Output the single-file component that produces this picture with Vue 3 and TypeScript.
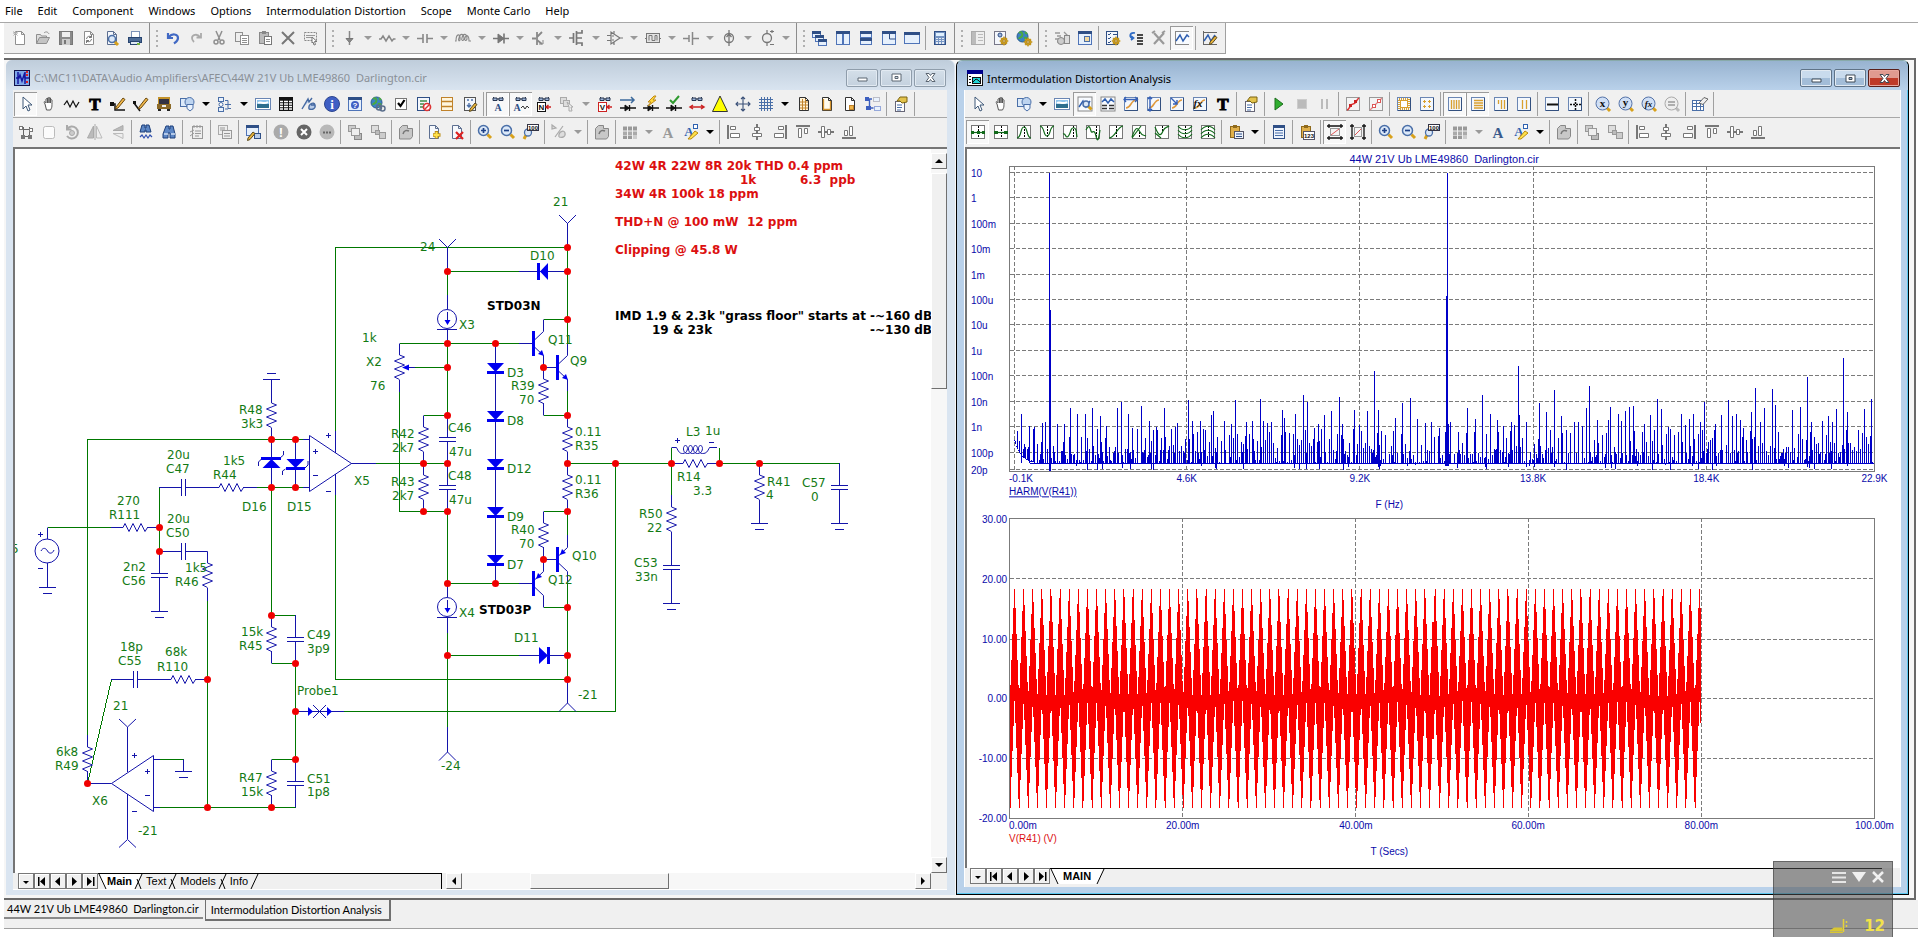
<script setup lang="ts">
import { ref } from 'vue'

const menus = ['File', 'Edit', 'Component', 'Windows', 'Options', 'Intermodulation Distortion', 'Scope', 'Monte Carlo', 'Help']

/* ---------- icon drawing helpers (16 x 16 grid) ---------- */
const p = (d: string, stroke = '#333', fill = 'none', w = 1) => `<path d="${d}" stroke="${stroke}" fill="${fill}" stroke-width="${w}"/>`
const r = (x: number, y: number, w: number, h: number, fill: string, stroke = 'none') =>
  `<rect x="${x}" y="${y}" width="${w}" height="${h}" fill="${fill}" stroke="${stroke}"/>`
const c = (x: number, y: number, rad: number, fill: string, stroke = 'none', w = 1) =>
  `<circle cx="${x}" cy="${y}" r="${rad}" fill="${fill}" stroke="${stroke}" stroke-width="${w}"/>`
const t = (s: string, x: number, y: number, size: number, fill: string, extra = '') =>
  `<text x="${x}" y="${y}" font-size="${size}" fill="${fill}" text-anchor="middle" font-weight="bold" ${extra}>${s}</text>`
const serif = 'font-family="Liberation Serif, serif"'
const G = '#8f8f8f'
const N = '#2f4f86'
const B = '#4a6fa8'
const doc = (s: string, f = '#fff') => p('M3.5 1.5h6l3 3v10h-9zM9.5 1.5v3h3', s, f)
const glasses = p('M3 2h4v2.500h-4zM9 2h4v2.500h-4zM7 3h2M3 2l1-1M13 2l-1-1', '#26344f', '#9db4d8', 1)
const lens = (x: number, y: number, rad: number, handle = '#d8a11c') =>
  p(`M${x + rad - 1} ${y + rad - 1}l3.500 3.500`, handle, 'none', 3) + c(x, y, rad, '#dbe8f8', B, 1.5)
const frame = r(1.5, 1.5, 13, 13, '#f4f8fd', '#6a86b4') + p('M14.500 2v12.500h-12.500', '#33507f')
const pencil = (x: number, y: number) => p(`M${x} ${y}l5-6 2 1.500-5 6-2.500 1z`, '#5a4a20', '#e8b33a')
const gear = (x: number, y: number) => c(x, y, 3.2, '#f0c23a', '#a87c10') + p(`M${x} ${y - 4.500}v9M${x - 4.500} ${y}h9M${x - 3} ${y - 3}l6 6M${x + 3} ${y - 3}l-6 6`, '#c99a1c', 'none', 1.2) + c(x, y, 1.2, '#fff', '#a87c10')
const clip = (a: string, b: string) => r(2.5, 2.5, 9, 11, a, b) + r(5, 1, 4, 3, b)
const win = (x: number, y: number, w: number, h: number) => r(x + .5, y + .5, w - 1, h - 1, '#e6f0fc', '#4f74b8') + r(x, y, w, 3, N)
const bars = '<path d="M1.500 1v14M14.500 1v14M1 14.500h14M1 1.500h14" stroke="#777" fill="none"/>'
const cur = (d: string, dash = 'M8.500 2v12') => bars + r(2, 2, 12, 12, '#fff') + `<path d="${dash}" stroke="#000" stroke-dasharray="2 1" fill="none"/>` + p(d, '#11691a', 'none', 1.2)
const align = (d: string, boxes: string) => p(d, '#777', 'none', 2) + p(boxes, '#777', '#fff')
const plot = frame + p('M3 12c5 0 5-8 10-8', '#e0993c', 'none', 1.5)
const globe = c(6.5, 6.5, 5.5, '#3b82c4', '#2a5b8c') + p('M3 3c3-2 4 1 3 3s-3 1-3 3M8 8c3-1 3 1 2 3M9 2l2 2', '#4aa843', 'none', 2)

const icons: Record<string, string> = {
  new: doc(G) + p('M1 3h5M3.500 1v5M1.500 1.500l4 4M5.500 1.500l-4 4', '#aaa'),
  open: p('M1.500 13.500v-9h4l1 1.500h5v2', G, '#ddd') + p('M1.500 13.500l3-6h10l-3 6z', G, '#c4c4c4') + p('M9 3c2-2 4-1 5 1', G),
  save: r(1.5, 1.5, 13, 13, '#8b8b8b', '#777') + r(4, 2, 8, 5, '#eee') + r(4, 9, 8, 6, '#ccc') + r(6, 10, 2, 4, '#777'),
  refresh: doc(G) + p('M5.500 9a3 3 0 0 1 5-2M10.500 5v2.500h-2.500M10.500 9a3 3 0 0 1-5 2M5.500 13v-2.500h2.500', '#777'),
  preview: doc('#5c6f91', '#f4f7fc') + lens(8, 9, 3.5),
  print: r(4.5, 1.5, 8, 6, '#fff', '#7d93b8') + r(1.5, 7.5, 13, 5, '#4d6c97', '#27446f') + r(3.5, 11.5, 9, 3, '#dfe9f5', '#27446f') + r(10, 13, 3, 2, '#74b33c'),
  undo: p('M3 3v5h5M4 7c3-4 9-3 9 1c0 3-2 4-4 5.500', '#4169c4', 'none', 2.2),
  redo: p('M13 3v4.500h-4.500M12 7c-3-4-8-2-8 1c0 2 1 3 2 4', '#aaa', 'none', 1.8),
  cut: p('M5 1l4 9M11 1l-4 9', G, 'none', 1.5) + c(5, 12, 2, 'none', G, 1.5) + c(11, 12, 2, 'none', G, 1.5),
  copy: r(1.5, 2.5, 7, 9, '#eee', G) + r(6.500, 5.5, 8, 9, '#fff', G) + p('M8 8.500h5M8 10.500h5M8 12.500h5', G),
  paste: clip('#bbb', '#888') + r(7.500, 6.5, 7, 8, '#fff', '#777') + p('M9 9.500h4M9 11.500h4', G),
  del: p('M2 2l12 12M14 2l-12 12', '#777', 'none', 2),
  select: '<path d="M1.500 2.500h12v8h-12z" fill="none" stroke="#888" stroke-dasharray="2 1"/>' + p('M3 5.500h9M3 7.500h6', '#999') + p('M9 7l5 4.500h-2.500l1 3-1.500.5-1-3-1 1z', '#777', '#fff'),
  gnd: p('M8.500 1v8M8.500 12v3', '#888', 'none', 1.5) + p('M5 8.500h7l-3.500 4z', '#777', '#888'),
  res: p('M0 9h2l2-3 3 5 3-5 3 5 1.500-2h2', '#888', 'none', 1.5),
  cap: p('M0 8.500h6M10 8.500h6M6 4v9M10 4v9', '#888', 'none', 1.6),
  ind: p('M0 11h1c0-8 5-8 4-1c-1 2-2 0-1-2c1-5 5-5 5 1c-1 3-3 1-2-1c1-5 5-5 5 1c-1 3-3 1-2-1c1-4 4-3 4 3h2', '#888', 'none', 1.1),
  diode: p('M0 8.500h16M11 3.500v10', '#777', 'none', 1.6) + p('M5 4v9l6-4.500z', '#777', '#777'),
  npn: p('M1 8.500h4M6 2v13M6 7l5-5M6 10l5 4', '#888', 'none', 1.8) + p('M8 14h4v-4', '#888'),
  mos: p('M0 8h4M4.500 3v10M7.500 1v14M8 3h5v-3M8 8h5M8 13h5v3', '#777', 'none', 1.7),
  opamp: p('M4 2v12l9-6zM0 5.500h4M0 10.500h4M13 8h3M7 1v3M7 12v3', '#777', '#eee', 1.2) + p('M5 6h2M5 10h2', '#777'),
  pulse: r(1.5, 3.500, 13, 9, '#e4e4e4', '#777') + p('M0 8.500h2M14 8.500h2M4 10.500v-5h3v5h3v-5h2v5', '#777'),
  batt: p('M0 8.500h6M6 5v7M9.500 2v13M10 8.500h6', '#888', 'none', 1.5),
  isrc: c(8, 8, 4.5, '#eee', '#777', 1.3) + p('M8 0v16M5.500 7l2.500-3 2.500 3', '#777', 'none', 1.3),
  vsrc: c(8, 8, 4.5, '#eee', '#777', 1.3) + p('M8 0v3M8 13v3M11 1.500h4M13 0v3M11 14.500h4', '#777', 'none', 1.2),
  cascade: win(0, 1, 9, 7) + win(3, 5, 9, 7) + win(6, 9, 9, 7),
  tilev: win(1, 1, 7, 14) + win(8, 1, 7, 14),
  tileh: win(2, 1, 12, 7) + win(2, 8, 12, 7),
  tile: win(1, 1, 14, 14) + p('M8.500 2v7h6', N),
  max: win(0, 2, 16, 12),
  calc: r(2.5, 1.5, 11, 13, '#7695c3', N) + r(4, 3, 8, 3, '#dff0ff') + p('M5 8v6M8 8v6M11 8v6', '#fff', 'none', 1.6) + p('M4 9.500h9M4 11.500h9', '#7695c3'),
  panel: r(1.5, 1.5, 13, 13, '#eee', '#aaa') + r(2, 2, 4, 12, '#bbb') + p('M8 4.500h5M8 7.500h5M8 10.500h5', '#bbb'),
  finddoc: r(1.5, 1.5, 11, 13, '#f4f7fc', '#778') + c(7, 5, 2, '#9db4d8', N) + gear(11, 11),
  globegear: globe + gear(12, 12),
  tree: p('M1 3h5M3 6h4M1 9h4M10 2l4 4M3 12h4', '#999', 'none', 1.3) + c(7, 11, 3.5, '#ccc', '#888') + r(10.5, 5.5, 5, 8, '#ddd', '#888'),
  winbox: win(1, 1, 14, 14) + r(7.5, 6.500, 5, 5, '#f4d9a0', B),
  listgear: r(1.5, 1.5, 11, 13, '#f4f7fc', N) + p('M3 4l1 1 2-2M3 8l1 1 2-2M3 12l1 1 2-2M8 4.500h4M8 8.500h3', N) + gear(11, 11),
  step: p('M7 3c-6-1-6 5-2 5M3 6l2.500 2-2.500 2', '#2f6bc4', 'none', 1.7) + p('M9 5h6M9 8h6M9 11h6M9 14h6', '#111', 'none', 1.4),
  tools: p('M3 3l10 11M13 3l-10 11', '#999', 'none', 2.2) + p('M1 3l3-2M11 3l3-2', '#999', 'none', 2),
  graph: r(1, 1, 14, 14, '#f8fbff') + p('M1.500 1v14M1 14.500h14M1 1.500h14', '#888') + p('M2 11l4-6 3 6 4-6 2 2', '#2f5fb0', 'none', 1.5),
  graphedit: p('M1.500 1v14M1 14.500h14M1 2.500h14', '#666') + p('M2 11l4-6 3 6 4-6', '#2f5fb0', 'none', 1.5) + pencil(8, 12),

  pointer: p('M5 1l0 12 3-3 2 5 2-1-2-5h4z', '#3e5878', '#fff'),
  hand: p('M4 8c-2-3 0-3 1-1v-4c1-1 1.500 0 1.500 0v4v-5c1-1 1.500 0 1.500 0v5v-5c1-1 1.500 0 1.500 0v5v-3c1-1 1.500 0 1.500 0c0 8 0 7-1.500 10h-4z', '#555', '#fff'),
  wave: p('M0 9l3-4 3 6 3-6 3 6 3-5', '#111', 'none', 1.2),
  T: t('T', 8, 14, 17, '#000', serif + ' stroke="#000"'),
  line: p('M1 8h4v6h10', '#111', 'none', 1.5) + r(0, 6, 4, 4, '#111') + p('M6 11l7-9 2 1.500-7 8.500-2.500 1z', '#6a4a10', '#f0b64a'),
  diag: p('M1 7l6 8', '#111', 'none', 1.5) + r(0, 5, 3, 3, '#111') + p('M6 11l7-9 2 1.500-7 8.500-2.500 1z', '#6a4a10', '#f0b64a'),
  bus: r(2, 1, 12, 12, '#c3922a') + r(3, 3, 10, 5, '#334') + r(1, 8, 14, 5, '#8c6a28') + r(2, 13, 3, 2, '#222') + r(11, 13, 3, 2, '#222') + r(6, 9, 4, 2, '#eee'),
  shapes: r(1.500, 2.500, 9, 8, '#dceafa', B) + c(10.5, 6, 4.5, '#bdd4f0', B) + p('M8 8.500h6v4l-3 2.500-3-2.500z', B, '#e9f2fd'),
  nodes: r(1.500, 1.500, 5, 4, '#e9f2fd', B) + c(4, 8.500, 2, '#fff', B) + r(1.500, 11.500, 5, 4, '#e9f2fd', B) + p('M8 4.500h3M8 8.500h6M11 4.500v8h3M8 13h3', B),
  picture: r(.5, 2.500, 15, 11, '#fff', '#6a86b4') + r(2, 4, 12, 4, '#8fc4ec') + r(2, 8, 12, 4, '#2d6e8e') + p('M3 7c3-2 5 2 10-1', '#fff', 'none', 2),
  table: r(1, 1, 14, 14, '#111') + p('M2 5.500h3M6 5.500h4M11 5.500h3M2 8h3M6 8h4M11 8h3M2 10.500h3M6 10.500h4M11 10.500h3M2 13h3M6 13h4M11 13h3', '#fff', 'none', 1.4),
  tagp: p('M1 13l6-10 1 3 3-4M8 13c-1-5 5-8 6-4s-3 5-6 4M10 9h4', '#466aa2', '#b7cbe8', 1.4),
  info: c(8, 8, 7.5, '#3f5fc4', '#2c458f') + t('i', 8, 13, 13, '#fff', serif),
  helpwin: win(1, 1, 14, 14) + c(8, 9, 4, '#3f5fc4') + t('?', 8, 12, 8, '#fff'),
  web: globe + c(9, 11.500, 2.500, 'none', '#5b6f8c', 1.5) + c(12.500, 12.500, 2.500, 'none', '#5b6f8c', 1.5),
  check: r(2.500, 2.500, 11, 11, '#fff', '#777') + p('M5 7l2.500 3 4-6', '#000', 'none', 2.2),
  disable: r(1.500, 1.500, 12, 13, '#f4f7fc', N) + p('M4 5h7M4 8h4M4 11h3', '#3e8f4a', 'none', 1.4) + c(11, 11, 3.500, '#fff', '#d33', 1.7) + p('M9 13l4-4', '#d33', 'none', 1.5),
  boxes: r(2.500, 1.500, 11, 13, '#fff6df', '#c0822a') + p('M3 5.500h10M3 10.500h10', '#c0822a', 'none', 1.5),
  edit: r(2.500, 1.500, 11, 13, '#f4f7fc', '#555') + p('M5 4h2M9 4h2M7 7v4M5 9l2 2 2-2', B, 'none', 1.4) + pencil(8, 13),
  ga: glasses + t('A', 8, 15, 10, '#2f4f86', serif),
  gaw: glasses + t('A', 4, 15, 10, '#2f4f86', serif) + p('M8 12l2-2 2 3 2-3 2 2', '#333'),
  gn: glasses + r(1.500, 6.500, 8, 9, '#fff', '#111') + t('N', 5.500, 14, 8, '#111') + p('M15 11h-5M12.500 9l-2.500 2 2.500 2', '#c22', 'none', 1.5),
  gv: glasses + r(1.500, 6.500, 8, 9, '#fff', '#c22') + t('V', 5.500, 14, 8, '#111') + p('M15 11h-5M12.500 9l-2.500 2 2.500 2', '#c22', 'none', 1.5),
  stackg: r(1.500, 1.500, 6, 6, '#ddd', '#aaa') + r(4.500, 4.500, 6, 6, '#ddd', '#aaa') + p('M8 6l6 5h-2l1 4h-3v-4z', '#aaa', '#eee'),
  cur1: p('M0 4h14M11 1l3 3-3 3', '#3d6a9c', 'none', 1.5) + p('M0 12h16M9.500 9v6', '#111', 'none', 1.4) + p('M5 9v6l4-3z', '#111', '#111'),
  power: p('M0 12h16M9.500 9v6', '#111', 'none', 1.4) + p('M5 9v6l4-3z', '#111', '#111') + p('M11 0l-6 6h3l-3 4 8-6h-3l3-4z', '#c08a18', '#ffd83a'),
  cond: p('M0 12h16M9.500 9v6', '#111', 'none', 1.4) + p('M5 9v6l4-3z', '#111', '#111') + p('M4 4l3 3 6-7', '#2f9a2f', 'none', 2),
  pin: glasses + p('M1 11h14M4 9l-3 2 3 2M12 9l3 2-3 2', '#c22', 'none', 1.5),
  warn: p('M8 0l7.500 15.500h-15z', '#333', '#ffff00'),
  plus: p('M8 1v14M1 8h14M6 3l2-2 2 2M6 13l2 2 2-2M3 6l-2 2 2 2M13 6l2 2-2 2', '#3a5078', 'none', 1.1),
  grid: p('M1 3.500h14M1 6.500h14M1 9.500h14M1 12.500h14M3.500 1v14M6.500 1v14M9.500 1v14M12.500 1v14', '#4a6fa8'),
  dgrid: doc('#333', '#fff3d8') + p('M4 6h8M4 9h8M4 12h8M6.500 3v11M9.500 3v11', '#c0822a', 'none', 1),
  dbord: doc('#333', '#fffbee') + p('M4.500 3v11M11.500 5v9M4 13.500h8', '#d4942e', 'none', 1.3),
  dtitle: doc('#333', '#fff') + r(7.500, 9.500, 4, 4, '#f0b64a', '#c0822a'),
  route: '<rect x="8.500" y="1.500" width="6" height="4" fill="#e9f2fd" stroke="#889" stroke-dasharray="1 1"/>' + p('M3 3h4M4.500 3v9h4', '#3d5fbf', 'none', 1.4) + '<rect x="9.500" y="10.500" width="6" height="4" fill="#e9f2fd" stroke="#3d5fbf" stroke-dasharray="1 1"/>' + r(0, 1, 4, 4, '#3d5fbf') + r(1, 10, 5, 4, '#3d5fbf'),
  props: r(2.500, 5.500, 9, 10, '#fff', '#667') + p('M4 9h5M4 11.500h5M4 14h4', B, 'none', 1.2) + p('M4 5l3-4h7v5l-5 1-2-2z', '#7a6310', '#e2c24c'),

  sel2: p('M3 5.500h10M3 12.500h10M5.500 3v11M11.500 3v11', '#666') + r(1, 2, 4, 4, '#777') + r(11, 4, 4, 4, '#777') + r(3, 11, 4, 4, '#777') + r(10, 11, 4, 4, '#777') + r(2, 3, 2, 2, '#fff') + r(12, 5, 2, 2, '#fff'),
  blank: '<rect x="2.500" y="2.500" width="11" height="12" rx="2" fill="#fbfbfb" stroke="#bbb"/>',
  rot: p('M3 5a6 6 0 1 1 0 7M3 1v4.500h4.500', '#aaa', 'none', 2) + c(8, 9, 2.500, '#ccc', '#aaa'),
  fliph: p('M6.500 2v12h-6z', '#aaa', '#bbb') + p('M9.500 2v12h5.500z', '#bbb', '#eee') + p('M8 0v16', '#aaa'),
  flipv: p('M13 6.500h-10l10-5z', '#aaa', '#bbb') + p('M13 9.500h-10l10 5z', '#bbb', '#eee'),
  find: p('M5 2h3v3h1v-3h3l2 8v4h-5v-5h-2v5h-5v-4z', '#1d3f7a', '#5c86c4') + p('M3 10h4M10 10h4', '#cfe0f5', 'none', 1.500),
  findw: p('M4 1h3v3h1v-3h3l2 7h-5v-2h-1v2h-5z', '#1d3f7a', '#5c86c4') + p('M2 13l2-2 2 3 2-3 2 3 2-3 2 2', '#2f4fb0', 'none', 1.2),
  noteg: r(3.500, 2.500, 10, 12, '#eee', '#999') + p('M5 1v3M8 1v3M11 1v3M6 7h6M6 9.500h6M6 12h4M1 8l4-2M1 12l4-3', '#999'),
  copyg: r(1.500, 1.500, 9, 9, '#eee', '#aaa') + r(5.500, 6.500, 9, 8, '#eee', '#999') + p('M3 4h5M3 6h5M7 9.500h6M7 12h6', '#999'),
  wedit: win(1, 1, 13, 11) + r(9.500, 9.500, 6, 5, '#b9cdea', N) + pencil(3, 14),
  dot1: c(8, 8, 7.500, '#aaa') + t('!', 8, 13, 13, '#fff'),
  dot2: c(8, 8, 7.500, '#666') + p('M5 5l6 6M11 5l-6 6', '#fff', 'none', 2),
  dot3: c(8, 8, 7.500, '#b8b8b8') + p('M4 8.500h2M7 8.500h2M10 8.500h2', '#666', 'none', 2),
  front: r(1.500, 1.500, 7, 6, '#ccc', '#999') + r(7.500, 9.500, 7, 6, '#bbb', '#888') + r(4.500, 4.500, 8, 7, '#eee', '#999'),
  back: r(1.500, 1.500, 7, 7, '#ddd', '#999') + r(9.500, 8.500, 6, 6, '#ccc', '#999') + r(5.500, 6.500, 4, 4, '#bbb', '#999'),
  send: p('M1.500 4.500l3-3h5v3h5v8l-2 2.500h-11z', '#888', '#c8c8c8') + p('M5 10c1-4 4-4 6-3', '#777', 'none', 1.5),
  padd: doc('#5c6f91', '#f6f9fd') + p('M10.500 7v7.500M7 11h7.500', '#b98a10', 'none', 3.500) + p('M10.500 8v6M7.500 11h6', '#ffe14a', 'none', 2),
  pdel: doc('#5c6f91', '#f6f9fd') + p('M7 8l7 7M14 8l-7 7', '#d22', 'none', 2.200),
  zin: lens(6.500, 6.500, 5) + p('M4 6.500h5M6.500 4v5', '#1c3f86', 'none', 1.700),
  zout: lens(6.500, 6.500, 5) + p('M4 6.500h5', '#1c3f86', 'none', 1.700),
  z100: p('M3 11l-2 4', '#d8a11c', 'none', 3) + c(5, 8.500, 3.500, '#dbe8f8', B, 1.3) + r(4.500, .5, 11, 6, '#fff', '#334') + t('100', 10, 6, 6, '#111'),
  tagg: p('M1 5v-4l4 3zM8 13c-1-5 5-8 6-4s-3 5-6 4M4 13l8-11', '#aaa', '#ddd', 1.2),
  cells: p('M1 4.500h4M6 4.500h4M11 4.500h4', '#999', 'none', 4) + p('M1 9.500h4M6 9.500h4M11 9.500h4', '#aaa', 'none', 4) + p('M1 13.500h4M6 13.500h4', '#999', 'none', 3) + p('M11 13.500h4', '#ccc', 'none', 3),
  Ag: t('A', 8, 14, 15, '#999', serif),
  Ab: t('A', 8, 14, 15, '#3a5a8c', serif),
  Af: t('A', 6, 12, 13, '#2f62b0', serif) + r(10.500, .5, 4, 4, '#fff', '#2f62b0') + p('M5 15l7-8 3 2-7 6z', '#b98a10', '#ffe14a'),
  al: align('M2 1v14', 'M4.500 2.500h5v3h-5zM4.500 9.500h9v4h-9z'),
  ac: align('M8 0v3M8 7v2M8 13v3', 'M5.500 3.500h5v3h-5zM3.500 9.500h9v3h-9z'),
  ar: align('M14 1v14', 'M6.500 2.500h5v3h-5zM2.500 9.500h9v4h-9z'),
  at: align('M1 2h14', 'M3.500 4.500h3v9h-3zM9.500 4.500h3v5h-3z'),
  am: align('M0 8h3M13 8h3M7 8h2', 'M3.500 2.500h3v11h-3zM9.500 5.500h3v5h-3z'),
  ab: align('M1 14h14', 'M3.500 6.500h3v5h-3zM8.500 2.500h3v9h-3z'),

  glens: r(1, 1, 14, 14, '#f8fbff', '#888') + p('M2 11l4-6 3 6 4-6', '#2f5fb0', 'none', 1.500) + lens(9, 8, 3),
  gtab: r(1, 1, 14, 14, '#f8fbff', '#888') + p('M2 6l3-3 3 4 3-4 3 3', '#2f5fb0', 'none', 1.500) + p('M2 9.500h5M9 9.500h5M2 12.500h5M9 12.500h5', '#333', 'none', 1.4),
  px: plot + p('M1 3.500h13M3 1l-2 2.500 2 2.500M12 1l2.500 2.500-2.500 2.500', '#3560b8', 'none', 1.3),
  py: plot + p('M4 1v14M2 3l2-2 2 2M2 13l2 2 2-2', '#3560b8', 'none', 1.4),
  pxy: plot + p('M2 2l6 6M8 4v4h-4', '#3560b8', 'none', 1.4),
  fx: plot + t('fx', 6, 11, 11, '#111', serif + ' font-style="italic"'),
  play: p('M4 2v12l8-6z', '#1d6e1d', '#2fae2f'),
  stop: r(3.500, 3.500, 9, 9, '#bbb', '#ccc'),
  pause: r(4, 3, 2, 10, '#bbb') + r(9, 3, 2, 10, '#bbb'),
  pts: r(1.500, 1.500, 13, 13, '#f4f4f4', '#999') + p('M2 14c3-1 3-6 6-6s3-4 6-6', '#d33', 'none', 1.500) + r(4, 8, 3, 3, '#c22') + r(9, 4, 3, 3, '#c22'),
  pts2: r(1.500, 1.500, 13, 13, '#f4f4f4', '#999') + p('M2 14l12-12', '#d88', 'none', 1.300) + r(4.500, 8.500, 3, 3, '#fff', '#d55') + r(9.500, 3.500, 3, 3, '#fff', '#d55'),
  ruler: frame + r(4.500, 4.500, 7, 7, '#fff', '#d9a030') + '<path d="M3 3h10v10h-10z" fill="none" stroke="#d9a030" stroke-width="2" stroke-dasharray="1 1"/>',
  marks: frame + p('M4 5.500h3M5.500 4v3M9 5.500h3M10.500 4v3M4 10.500h3M5.500 9v3M9 10.500h3M10.500 9v3', '#d9a030'),
  v4: frame + p('M4.500 4v9M7 4v9M9.500 4v9M12 4v9', '#d9a030', 'none', 1.300),
  h4: frame + p('M4 4.500h9M4 7h9M4 9.500h9M4 12h9', '#d9a030', 'none', 1.300),
  v3: frame + p('M5.500 4v4M8.500 4v9M11.500 4v9', '#d9a030', 'none', 1.300),
  v2: frame + p('M6.500 4v9M10.500 4v9', '#d9a030', 'none', 1.300),
  hline: frame + p('M3 8.500h11', '#111', 'none', 2),
  dcross: frame + '<path d="M3 8.500h11M8.500 3v11" stroke="#111" stroke-width="1.500" stroke-dasharray="2 1" fill="none"/>',
  lx: p('M12 12l3 3', '#d8a11c', 'none', 3) + c(7.500, 7.500, 6.500, '#cfdff6', '#5573a8') + t('x', 7.500, 11, 11, '#111', serif),
  ly: p('M12 12l3 3', '#d8a11c', 'none', 3) + c(7.500, 7.500, 6.500, '#cfdff6', '#5573a8') + t('y', 7.500, 10, 11, '#111', serif),
  lf: p('M12 12l3 3', '#d8a11c', 'none', 3) + c(7.500, 7.500, 6.500, '#cfdff6', '#5573a8') + t('fx', 7.500, 11, 9, '#111', serif + ' font-style="italic"'),
  le: p('M12 12l3 3', '#bbb', 'none', 3) + c(7.500, 7.500, 6.500, '#eee', '#aaa') + p('M4 6h7M4 9h7', '#999', 'none', 1.4),
  erase: r(.5, 4.500, 11, 10, '#fff', B) + p('M1 7.500h11M1 10.500h11M4.500 5v9M8.500 5v9', B) + p('M7 7l5-5.500 4 1.500-5 5.500z', '#666', '#eee'),

  k1: cur('M1 8.500h14') + p('M1 8.500h3M12 8.500h3M7 8.500h3', '#11691a', 'none', 3),
  k2: cur('M1 8.500h14') + p('M1 8.500h4M11 8.500h4', '#11691a', 'none', 3),
  k3: cur('M1 14c5-1 3-11 7-11s2 10 7 11'),
  k4: cur('M1 2c5 1 3 10 7 10s2-9 7-10'),
  k5: cur('M1 10c3-1 2 3 4 3s3-4 4-7 4-3 5 0l1 7', 'M11.500 2v12'),
  k6: cur('M1 6c3-6 4-3 5 1s3-4 5 5 3 0 4-6', 'M11.500 2v12'),
  k7: cur('M1 14c6 0 8-11 14-12', 'M8.500 2v12'),
  k8: cur('M1 13c4-12 6-9 8-5s4 3 6 4M1 14l9-12', 'M8.500 8v6'),
  k9: cur('M1 3c4 10 6 9 8 4s4-3 6-5M1 9l6 5', 'M8.500 2v6'),
  k10: cur('M1 2c4 5 10 5 14 0M1 6c4 5 10 5 14 0M1 10c4 5 10 5 14 0'),
  k11: cur('M1 6c4-5 10-5 14 0M1 10c4-5 10-5 14 0M1 14c4-5 10-5 14 0'),
  pastec: clip('#e0b04a', '#8f6a1c') + r(6.500, 7.500, 9, 7, '#eef4fd', '#556') + p('M8 10h6M8 12.500h6', N),
  list: r(2.500, 1.500, 11, 13, '#eef4fd', N) + r(2, 1, 12, 3, N) + p('M4 6.500h8M4 9h8M4 11.500h8', B),
  p123: clip('#e0b04a', '#8f6a1c') + r(4.500, 7.500, 11, 8, '#fff', '#556') + t('123', 10, 14, 6, '#111'),
  cx: r(3.500, 4.500, 9, 7, '#f4f4f4', '#999') + p('M4 11l8-6', '#d55') + p('M0 2h16M0 14h16M2 0v4M14 0v4M2 12v4M14 12v4', '#111', 'none', 1.3),
  cy: r(4.500, 3.500, 7, 9, '#f4f4f4', '#999') + p('M5 11l6-6', '#d55') + p('M2 0v16M14 0v16M0 2h4M12 2h4M0 14h4M12 14h4', '#111', 'none', 1.3),
}

/* A toolbar line: names, "name!" pressed, "|" separator, "v" / "w" drop arrows, "#" group end + grip */
const mainBar = 'new open save refresh preview print # undo redo cut copy paste del select # gnd w res w cap w ind w diode w npn w mos w opamp w pulse w batt w isrc w vsrc w # cascade tilev tileh tile max | calc # panel finddoc globegear # tree winbox | listgear step tools graph! | graphedit'.split(' ')
const leftBars = [
  'pointer! hand wave T line diag bus shapes v nodes v picture table tagp info helpwin web check disable boxes edit | ga! gaw! gn stackg w gv cur1 power cond pin warn plus grid v dgrid dbord dtitle route | props |',
  'sel2 blank rot fliph flipv | findw find | noteg | copyg | wedit | dot1 dot2 dot3 | front back | send | padd pdel | zin zout z100 | tagg w | send | cells w Ag Af v | al ac ar at am ab',
].map(s => s.split(' '))
const rightBars = [
  'pointer hand shapes v picture glens! gtab px py pxy fx T | props | play stop pause | pts pts2 | ruler marks | v4! h4! v3 v2 | hline dcross | lx ly lf le | erase |',
  'k1! k2 k3 k4 k5 k6 k7 k8 k9 k10 k11 | pastec v | list | p123 | cx! cy | zin zout z100 | cells w Ab Af v | send | front back | al ac ar at am ab',
].map(s => s.split(' '))
const isMark = (s: string) => s.length === 1 && '|vw#'.includes(s)

/* ---------- schematic ---------- */
const zigV = (x: number, y: number) => `M${x} ${y}l5 2-10 4 10 4-10 4 10 4-10 4 5 2.500`
const zigH = (x: number, y: number) => `M${x} ${y}l2-4 4 8 4-8 4 8 4-8 4 8 2.500-4`
const gndAt = (x: number, y: number) => `M${x - 8.5} ${y}h17M${x - 4.5} ${y + 6}h9`

const green = [
  'M87.500 735v-295.500H303M47.500 527.500H111M159.500 487V551M256 487.500H303M207.500 600V807.500M271.500 487V615.500H295.500',
  'M111.500 679.500L87.500 783.500M160 759.500H183.500M160 807.500H295.500M271.500 663.500H295.500V759.500H271.500M344 711.500H615.500V463.500',
  'M335.500 431V247.500H567.500V343M335.500 495V679.500H567.500V583M376 463.500H447.500',
  'M447.500 271V295M447.500 343.500V415.500H423.500M399.500 343.500H519M415 367.500H447.500M399.500 392V511.500H447.500V583.500H519',
  'M447.500 271.500H519M447.500 633V727M447.500 655.500H519M543.500 319.500H567.500M543.500 415.500H567.500V391M543.500 511.500H567.500V535M543.500 607.500H567.500',
  'M567.500 463.500H671.500V495M671.500 463.500V447.500M719.500 463.500V447.500M719.500 463.500H839.500',
].join('')

const blue = [
  // source, R111, C47, R44
  'M47.500 527.500V539M47.500 563V587', gndAt(47.5, 587.5), 'M38 534.500h5M40.500 532v5M38 568.500h5M41 551c2-4 5-3 6.500 0s5 3 6.500-1',
  'M111 527.500h12', zigH(123, 527.5), 'M147 527.500h12M159 487.500h22.500M181.500 479v17M185.500 479v17M185.500 487.500h33.500', zigH(219, 487.5), 'M243 487.500h14',
  // C50, R46, C56
  'M159 551.500h22.500M181.500 543v17M185.500 543v17M185.500 551.500h22V563', zigV(207.5, 563), 'M207.500 588v13',
  'M159.500 551v22.500M151 573.500h17M151 577.500h17M159.500 577.500V611', gndAt(159.5, 611.5),
  // R48, D16, D15
  'M263 379.500h17M267 373.500h9M271.500 379.500V403', zigV(271.5, 403), 'M271.500 428V487M295.500 439V487M303 439.500h6M303 487.500h6',
  'M258.500 466v-4l3-3M280 458l3.500-3v-4M282.500 475v-4l3-2M305 468l3-3v-4',
  // X5
  'M309.500 435.500V491.500L351.500 463.500ZM313 451.500h5M315.500 449v5M313 475.500h5M326 435.500h5M328.500 433v5M326 491.500h5M335.500 431V453M335.500 474V495M351 463.500h25',
  // R45, C49, R47, C51
  'M271.500 615V627', zigV(271.5, 627), 'M271.500 651v12.500M295.500 615V637.500M287 637.500h17M287 641.500h17M295.500 641.500V663',
  'M271.500 759.500V771', zigV(271.5, 771), 'M271.500 795V807M295.500 759V781.500M287 781.500h17M287 785.500h17M295.500 785.500V807.500',
  // probe
  'M295 711.500h49M313 705l13 13M326 705l-13 13',
  // C55, R110, R49
  'M111 679.500h22.500M133.500 671v17M137.500 671v17M137.500 679.500H171', zigH(171, 679.5), 'M195 679.500h12M87.500 735V747', zigV(87.5, 747), 'M87.500 771v12',
  // X6
  'M87 783.500h24.500M153.500 755.500V811.500L111.500 783.500ZM145 771.500h5M147.500 769v5M145 795.500h5M132 755.500h5M134.500 753v5M132 811.500h5',
  'M119 719l8.500 8 8.500-8M127.500 727V772M127.500 794V839M119 847.500l8.500-8 8.500 8M153 759.500h7M153 807.500h7M183.500 759.500V771', gndAt(183.5, 771.5),
  // supply column and sources
  'M439 239l8.500 8.500 8.500-8.500M447.500 247V271M447.500 295V309M437 329.500h20M447.500 329V343M447.500 312v10M447.500 583V597M437 617.500h20M447.500 617V633M447.500 600v10M447.500 727V752M439 760.500l8.500-8.500 8.500 8.500',
  // X2, R42, R43, C46, C48
  'M399.500 343.500V355', zigV(399.5, 355), 'M399.500 380V392M404 367.500h11M423.500 415.500V427', zigV(423.5, 427), 'M423.500 452V475', zigV(423.5, 475), 'M423.500 500V511',
  'M447.500 415V437.500M439 437.500h17M439 441.500h17M447.500 441.500V485.500M439 485.500h17M439 489.500h17M447.500 489.500V511',
  // diodes
  'M495.500 343V583M519 271.500h48M519 655.500h48',
  // transistors
  'M559 215l8.500 8.500 8.500-8.500M567.500 223V247M519 343.500h14M535 339.500l8.500-8V319.500M535 347.500l8.500 8V379M543 367.500h14M559 363.500l8.500-8V343M559 371.500l8.500 8V391',
  zigV(543.5, 379), 'M543.500 403v12.500M567.500 415V427', zigV(567.5, 427), 'M567.500 452V475', zigV(567.5, 475), 'M567.500 500V511M543.500 511.500V523', zigV(543.5, 523), 'M543.500 547V571.500l-8.500 8M543 559.500h14M567.500 535V547.500l-8.500 8M559 563.500l8.500 8V583M519 583.500h14M535 587.500l8.500 8V607.500M567.500 679V703M559 711.500l8.500-8.500 8.500 8.500',
  // L3, R14, R50, C53, R41, C57
  'M671.500 447.500h5c2 4 3 6 6 6c6 0 6-8 3-8s-3 8 2 8c6 0 6-8 3-8s-3 8 2 8c6 0 6-8 3-8s-3 8 2 8c6 0 6-8 3-8s-3 8 2 8c4 0 5-2 7-6h7.500',
  'M675 440.500h5M677.500 438v5M709 442.500h5M671 463.500h12', zigH(683, 463.5), 'M707 463.500h12',
  'M671.500 495V507', zigV(671.5, 507), 'M671.500 532V565.500M663 565.500h17M663 569.500h17M671.500 569.500V603', gndAt(671.5, 603.5),
  'M759.500 463V475', zigV(759.5, 475), 'M759.500 500V523', gndAt(759.5, 523.5),
  'M839.500 463V485.500M831 485.500h17M831 489.500h17M839.500 489.500V523', gndAt(839.5, 523.5),
].join('')

const diodeTriangles = [363, 411, 459, 507, 555].map(y => `M487 ${y}h17l-8.500 9zM487 ${y + 8}h17v3h-17z`).join('')
const solid = diodeTriangles + [
  'M271.500 459l9 9h-18zM261 457h20v3h-20zM286.500 459h18l-9 9zM286 467h19v3h-19z',
  'M548 263v17l-8-8.500zM537 263h3v17h-3zM539 647v17l9-8.500zM547 647h3v17h-3z',
  'M532 331h3v25h-3zM556 355h3v25h-3zM556 547h3v25h-3zM532 571h3v25h-3z',
  'M544 356l-6-2 4-4zM568 380l-6-2 4-4zM560 555l2-6 4 4zM536 579l2-6 4 4z',
  'M402 367.500l7-3v6zM308 707l5 4.500-5 4.500zM327 707l5 4.500-5 4.500zM447.500 325l-3-5h6zM447.500 613l-3-5h6z',
].join('')

const dots = [
  [159.5, 527.5], [159.5, 551.5], [271.5, 439.5], [295.5, 439.5], [271.5, 487.5], [295.5, 487.5], [271.5, 615.5], [295.5, 663.5], [295.5, 711.5], [295.5, 759.5], [271.5, 807.5], [207.5, 807.5], [207.5, 679.5], [87.5, 783.5],
  [447.5, 271.5], [447.5, 343.5], [447.5, 367.5], [447.5, 415.5], [447.5, 463.5], [447.5, 511.5], [447.5, 583.5], [447.5, 655.5], [423.5, 463.5], [423.5, 511.5], [495.5, 343.5], [495.5, 583.5],
  [567.5, 247.5], [567.5, 271.5], [567.5, 319.5], [567.5, 415.5], [567.5, 463.5], [567.5, 511.5], [567.5, 607.5], [567.5, 655.5], [567.5, 679.5], [543.5, 367.5], [543.5, 559.5], [615.5, 463.5], [671.5, 463.5], [719.5, 463.5], [759.5, 463.5],
]

type Label = [string, number, number]
const labels: Label[] = [
  ['R48', 239, 414], ['3k3', 241, 428], ['20u', 167, 459], ['C47', 166, 473], ['1k5', 223, 465], ['R44', 213, 479], ['D16', 242, 511], ['D15', 287, 511], ['X5', 354, 485],
  ['270', 117, 505], ['R111', 109, 519], ['20u', 167, 523], ['C50', 166, 537], ['2n2', 123, 571], ['C56', 122, 585], ['1k5', 185, 572], ['R46', 175, 586], ['5', 11, 553],
  ['15k', 241, 636], ['R45', 239, 650], ['C49', 307, 639], ['3p9', 307, 653], ['X2', 366, 366], ['76', 370, 390], ['1k', 362, 342], ['R42', 391, 438], ['2k7', 392, 452], ['C46', 448, 432], ['47u', 449, 456],
  ['R43', 391, 486], ['2k7', 392, 500], ['C48', 448, 480], ['47u', 449, 504], ['X4', 459, 617], ['18p', 120, 651], ['C55', 118, 665], ['68k', 165, 656], ['R110', 157, 671], ['21', 113, 710],
  ['6k8', 56, 756], ['R49', 55, 770], ['X6', 92, 805], ['-21', 138, 835], ['R47', 239, 782], ['15k', 241, 796], ['C51', 307, 783], ['1p8', 307, 796], ['Probe1', 297, 695], ['-24', 441, 770],
  ['21', 553, 206], ['24', 420, 251], ['D10', 530, 260], ['X3', 459, 329], ['Q11', 548, 344], ['Q9', 570, 365], ['D3', 507, 377], ['R39', 511, 390], ['70', 519, 404],
  ['D8', 507, 425], ['D12', 507, 473], ['D9', 507, 521], ['D7', 507, 569], ['R40', 511, 534], ['70', 519, 548], ['Q10', 572, 560], ['Q12', 548, 584], ['0.11', 575, 436], ['R35', 575, 450], ['0.11', 575, 484], ['R36', 575, 498],
  ['L3', 686, 436], ['1u', 705, 435], ['R14', 677, 481], ['3.3', 693, 495], ['R50', 639, 518], ['22', 647, 532], ['C53', 634, 567], ['33n', 635, 581], ['R41', 767, 486], ['4', 766, 499], ['C57', 802, 487], ['0', 811, 501],
  ['D11', 514, 642], ['-21', 578, 699],
]
const notes: Label[] = [
  ['42W 4R 22W 8R 20k THD 0.4 ppm', 615, 170], ['1k', 740, 184], ['6.3  ppb', 800, 184], ['34W 4R 100k 18 ppm', 615, 198], ['THD+N @ 100 mW  12 ppm', 615, 226], ['Clipping @ 45.8 W', 615, 254],
]
const titles: Label[] = [
  ['STD03N', 487, 310], ['STD03P', 479, 614], ['IMD 1.9 & 2.3k "grass floor" starts at -~160 dB', 615, 320], ['19 & 23k', 652, 334], ['-~130 dB', 870, 334],
]

/* ---------- plots ---------- */
const decades: [string, number][] = [['10', 172.5], ['1', 197.5], ['100m', 223.5], ['10m', 248.5], ['1m', 274.5], ['100u', 299.5], ['10u', 324.5], ['1u', 350.5], ['100n', 375.5], ['10n', 401.5], ['1n', 426.5], ['100p', 452.5], ['20p', 469.5]]
const freqs: [string, number][] = [['-0.1K', 1014.5], ['4.6K', 1186.5], ['9.2K', 1359.5], ['13.8K', 1532.5], ['18.4K', 1705.5], ['22.9K', 1873.5]]
const volts: [string, number][] = [['30.00', 518.5], ['20.00', 578.5], ['10.00', 638.5], ['0.00', 697.5], ['-10.00', 757.5], ['-20.00', 817.5]]
const times: [string, number][] = [['0.00m', 1009.5], ['20.00m', 1182.5], ['40.00m', 1355.5], ['60.00m', 1527.5], ['80.00m', 1700.5], ['100.00m', 1873.5]]

const peaksLow = '214,792 238,828 253,832 277,820 286,816 322,822 343,822 361,774 382,793 406,793 427,774 451,797 469,828 502,774 514,756 535,792 547,834 574,768 598,814 619,830 643,774 664,836 676,830 682,820 715,750 727,812 751,814 760,838 784,795 790,783 823,814 844,822 856,750 889,816 907,812 931,747 940,812 952,820 964,816 997,780 1003,804 1036,792 1060,735 1072,756 1093,834 1105,822 1123,796 1144,784 1168,741 1177,822 1213,780 1228,826 1252,783 1273,663 1285,780 1336,804 1357,759 1381,744 1402,808 1426,820'
const peaksHigh = '16,820 34,816 55,834 88,816 139,774 163,808 184,735 208,792 229,810 247,828 271,816 280,825 292,648 295,795 316,816 355,760 376,786 400,720 421,798 460,816 472,816 484,828 496,774 505,708 529,810 562,810 568,771 592,792 601,814 613,783 625,771 637,768 670,822 688,795 709,747 721,778 742,830 781,792 793,825 805,808 817,792 838,816 850,756 883,822 901,795 922,750 934,798 946,792 958,810 967,834 991,786 1003,714 1018,816 1030,774 1054,717 1063,765 1114,780 1138,771 1159,681 1171,816 1204,812 1222,798 1234,816 1246,777 1267,624 1279,786 1330,777 1351,747'
const toPeaks = (s: string, x0: number) => s.split(' ').map(v => v.split(',').map(Number)).map(([x, y]) => [x0 + Math.floor(x / 3) + 0.5, 150 + Math.round(y / 3)])

let seed = 7
const rand = () => (seed = (seed * 16807) % 2147483647) / 2147483647
let spectrum = ''
for (let x = 1014; x < 1873; x++) {
  const floor = x < 1034 ? 463 - Math.round(23 * Math.exp(-(x - 1014) / 7)) : 463
  const step = x % 4
  const a = rand()
  const b = rand()
  const rise = step === 1 ? 8 + a * 26 : step === 3 ? a * b * 26 : b > 0.7 ? a * 14 : 0
  const bottom = floor + (b > 0.93 ? 2 + a * 5 : 1)
  spectrum += `M${x + 0.5} ${Math.round(floor - rise)}V${Math.round(bottom)}`
}
for (const [x, y] of [...toPeaks(peaksLow, 950), ...toPeaks(peaksHigh, 1420)]) spectrum += `M${x} ${y}V463`
spectrum += 'M1049.500 173V471M1050.500 310V471M1446.500 173V466M1445.500 296V466M1444.500 432V466M1447.500 424V466'

/* Each cycle is a positive and a negative lobe, half a period apart */
let wave = ''
const drawLobe = (center: number, base: number, sign: number) => {
  const tip = Math.floor(center)
  for (let x = tip - 4; x <= tip + 4; x++) {
    if (x < 1010 || x >= 1700) continue
    const d = Math.abs(x + 0.5 - center)
    const k = x === tip ? 1 : Math.max(0, 1.06 - d / 4.3)
    wave += `M${x + 0.5} ${base}V${Math.round(base + sign * 109 * Math.min(1, k))}`
  }
}
for (let n = 0; n < 77; n++) {
  drawLobe(1014.5 + n * 9.12, 698, -1)
  drawLobe(1010 + n * 9.12, 698, 1)
}
for (let x = 1010; x < 1700; x++) {
  const swell = 3 + Math.round(2 * Math.abs(Math.sin((x - 1010) / 70)))
  wave += `M${x + 0.5} ${698 - swell}V${697 + swell}`
}

const sheets = ['Main', 'Text', 'Models', 'Info']
const sheet = ref('Main')
const documents = ['44W 21V Ub LME49860  Darlington.cir', 'Intermodulation Distortion Analysis']
const navGlyphs = [
  'M5 7h6l-3 3z', 'M4 3h1.500v9h-1.500zM11 3v9l-5-4.500z', 'M10 3v9l-5-4.500z', 'M6 3v9l5-4.500z', 'M5 3v9l5-4.500zM11 3h1.500v9h-1.500z',
]
const windowGlyphs = ['M4 8h9v3h-9z', 'M4 4h9v7h-9zM7 6.500h3v2h-3z', 'M4 3.500h3l1.500 2 1.500-2h3l-3 4 3 4h-3l-1.500-2-1.500 2h-3l3-4z']
</script>

<template>
  <div class="app">
    <nav class="menu">
      <button v-for="m in menus" :key="m" type="button">{{ m }}</button>
    </nav>

    <div class="bar main-bar">
      <template v-for="(s, i) in mainBar" :key="i">
        <span v-if="s === '|'" class="sep"></span>
        <span v-else-if="s === '#'" class="grip"></span>
        <button v-else-if="isMark(s)" type="button" class="drop" :class="{ dim: s === 'w' }" aria-label="More"></button>
        <button v-else type="button" class="tool" :class="{ pressed: s.endsWith('!') }" :aria-label="s.replace('!', '')">
          <svg width="16" height="16" viewBox="0 0 16 16" v-html="icons[s.replace('!', '')]"></svg>
        </button>
      </template>
    </div>

    <main class="mdi">
      <section class="window back">
        <header class="titlebar">
          <svg class="app-icon" width="16" height="16" viewBox="0 0 16 16">
            <rect width="16" height="16" fill="#10104a" /><rect x="1" y="1" width="14" height="14" fill="#7fa8e8" />
            <path d="M2 8h3l1-3 2 6 2-6 1 3h4M4 2v12M11 2v12" stroke="#1414a0" fill="none" stroke-width="1.500" />
            <path d="M12 2h2M12 5h2M12 12h2" stroke="#d22" stroke-width="2" />
          </svg>
          <h1>C:\MC11\DATA\Audio Amplifiers\AFEC\44W 21V Ub LME49860&nbsp; Darlington.cir</h1>
          <div class="controls">
            <button v-for="(g, i) in windowGlyphs" :key="i" type="button" :aria-label="['Minimize', 'Restore', 'Close'][i]">
              <svg width="17" height="15" viewBox="0 0 17 15"><path :d="g" fill="#fff" fill-rule="evenodd" stroke="#5b6672" /></svg>
            </button>
          </div>
        </header>
        <div class="client">
          <div v-for="(bar, b) in leftBars" :key="b" class="bar">
            <template v-for="(s, i) in bar" :key="i">
              <span v-if="s === '|'" class="sep"></span>
              <button v-else-if="isMark(s)" type="button" class="drop" :class="{ dim: s === 'w' }" aria-label="More"></button>
              <button v-else type="button" class="tool" :class="{ pressed: s.endsWith('!') }" :aria-label="s.replace('!', '')">
                <svg width="16" height="16" viewBox="0 0 16 16" v-html="icons[s.replace('!', '')]"></svg>
              </button>
            </template>
          </div>
          <div class="pane">
            <div class="sheet">
              <svg class="schematic" width="916" height="723" viewBox="15 149 916 723">
                <g fill="none" shape-rendering="crispEdges">
                  <path :d="green" stroke="#007800" />
                </g>
                <path :d="blue" fill="none" stroke="#1414aa" />
                <g fill="none" stroke="#1414aa">
                  <circle cx="47" cy="551" r="12" />
                  <circle cx="447" cy="319" r="9.500" />
                  <circle cx="447" cy="607" r="9.500" />
                </g>
                <path :d="solid" fill="#0000f0" />
                <circle v-for="(d, i) in dots" :key="i" :cx="d[0]" :cy="d[1]" r="3.500" fill="#f00000" />
                <text v-for="(l, i) in labels" :key="'l' + i" :x="l[1]" :y="l[2]" class="label">{{ l[0] }}</text>
                <text v-for="(l, i) in notes" :key="'n' + i" :x="l[1]" :y="l[2]" class="note red">{{ l[0] }}</text>
                <text v-for="(l, i) in titles" :key="'t' + i" :x="l[1]" :y="l[2]" class="note">{{ l[0] }}</text>
              </svg>
            </div>
            <div class="vscroll">
              <button type="button" class="sb" aria-label="Scroll up"><svg width="14" height="14" viewBox="0 0 14 14"><path d="M3 9h8l-4-4z" /></svg></button>
              <div class="thumb v"></div>
              <button type="button" class="sb end" aria-label="Scroll down"><svg width="14" height="14" viewBox="0 0 14 14"><path d="M3 5h8l-4 4z" /></svg></button>
            </div>
          </div>
          <div class="sheets">
            <div class="navs">
              <button v-for="(g, i) in navGlyphs" :key="i" type="button" class="sb" aria-label="Sheet navigation"><svg width="14" height="14" viewBox="1 0 14 14"><path :d="g" /></svg></button>
            </div>
            <div class="tabs">
              <button v-for="(s, i) in sheets" :key="s" type="button" class="tab" :class="{ on: s === sheet }" @click="sheet = s">
                <svg v-if="s === sheet" class="lead" width="9" height="15" viewBox="0 0 9 15"><path d="M0 0h9v15h-2z" fill="#fff" /><path d="M1 0L8 15" stroke="#000" fill="none" /></svg>
                <span>{{ s }}</span>
                <svg width="10" height="15" viewBox="0 0 10 15">
                  <path v-if="s === sheet" d="M0 0h9L2 15H0z" fill="#fff" />
                  <path d="M2 15L9 0" stroke="#000" fill="none" />
                  <path v-if="i < 3" d="M4 5L8 15" stroke="#000" fill="none" />
                </svg>
              </button>
            </div>
            <div class="hscroll">
              <button type="button" class="sb" aria-label="Scroll left"><svg width="14" height="14" viewBox="0 0 14 14"><path d="M9 3v8l-4-4z" /></svg></button>
              <div class="thumb h"></div>
              <button type="button" class="sb end" aria-label="Scroll right"><svg width="14" height="14" viewBox="0 0 14 14"><path d="M5 3v8l4-4z" /></svg></button>
            </div>
            <div class="corner"></div>
          </div>
        </div>
      </section>

      <section class="window front">
        <header class="titlebar">
          <svg class="app-icon" width="16" height="16" viewBox="0 0 16 16">
            <rect width="16" height="16" fill="#111" /><rect x="1" y="4" width="14" height="11" fill="#fff" /><rect width="16" height="4" fill="#00008c" />
            <rect x="5" y="7" width="9" height="7" fill="#111" /><rect x="6" y="8" width="7" height="5" fill="#20d8d8" /><path d="M6 12l3-3 2 1 2 2M2 6.500h2M2 9.500h2M2 12.500h2" stroke="#111" fill="none" />
          </svg>
          <h1>Intermodulation Distortion Analysis</h1>
          <div class="controls">
            <button v-for="(g, i) in windowGlyphs" :key="i" type="button" :aria-label="['Minimize', 'Restore', 'Close'][i]">
              <svg width="17" height="15" viewBox="0 0 17 15"><path :d="g" fill="#fff" fill-rule="evenodd" stroke="#3f4a56" /></svg>
            </button>
          </div>
        </header>
        <div class="client">
          <div v-for="(bar, b) in rightBars" :key="b" class="bar">
            <template v-for="(s, i) in bar" :key="i">
              <span v-if="s === '|'" class="sep"></span>
              <button v-else-if="isMark(s)" type="button" class="drop" :class="{ dim: s === 'w' }" aria-label="More"></button>
              <button v-else type="button" class="tool" :class="{ pressed: s.endsWith('!') }" :aria-label="s.replace('!', '')">
                <svg width="16" height="16" viewBox="0 0 16 16" v-html="icons[s.replace('!', '')]"></svg>
              </button>
            </template>
          </div>
          <div class="pane">
            <svg class="plots" viewBox="967 149 932 718" preserveAspectRatio="xMinYMin meet">
              <g fill="none" stroke="#7b7b7b" shape-rendering="crispEdges">
                <g stroke-dasharray="4 2">
                  <path v-for="d in decades" :key="d[0]" :d="`M1010 ${d[1]}H1873`" />
                  <path v-for="f in freqs.slice(0, 5)" :key="f[0]" :d="`M${f[1]} 166V471`" />
                  <path v-for="v in volts.slice(1, 5)" :key="v[0]" :d="`M1010 ${v[1]}H1873`" />
                  <path v-for="s in times.slice(1, 5)" :key="s[0]" :d="`M${s[1]} 518V817`" />
                </g>
                <rect x="1009.500" y="166.500" width="864" height="305" />
                <rect x="1009.500" y="518.500" width="864" height="299" />
              </g>
              <path :d="spectrum" stroke="#0000c8" shape-rendering="crispEdges" />
              <path d="M1030 463.500H1873" stroke="#0000c8" shape-rendering="crispEdges" />
              <path :d="wave" stroke="#fa0000" shape-rendering="crispEdges" />
              <g class="axis">
                <text x="1349" y="163" class="heading">44W 21V Ub LME49860&nbsp; Darlington.cir</text>
                <text v-for="d in decades" :key="d[0]" x="971" :y="d[1] + 4">{{ d[0] }}</text>
                <text x="1009" y="482">-0.1K</text>
                <text v-for="f in freqs.slice(1)" :key="f[0]" :x="f[1]" y="482" text-anchor="middle">{{ f[0] }}</text>
                <text x="1009" y="495" text-decoration="underline">HARM(V(R41))</text>
                <text x="1375" y="508">F (Hz)</text>
                <text v-for="v in volts" :key="v[0]" x="1007" :y="v[1] + 4" text-anchor="end">{{ v[0] }}</text>
                <text x="1009" y="828">0.00m</text>
                <text v-for="s in times.slice(1)" :key="s[0]" :x="s[1]" y="828" text-anchor="middle">{{ s[0] }}</text>
                <text x="1009" y="841" class="trace">V(R41) (V)</text>
                <text x="1370" y="854">T (Secs)</text>
              </g>
            </svg>
          </div>
          <div class="sheets">
            <div class="navs">
              <button v-for="(g, i) in navGlyphs" :key="i" type="button" class="sb" aria-label="Sheet navigation"><svg width="14" height="14" viewBox="1 0 14 14"><path :d="g" /></svg></button>
            </div>
            <div class="tabs">
              <button type="button" class="tab on">
                <svg class="lead" width="9" height="15" viewBox="0 0 9 15"><path d="M0 0h9v15h-2z" fill="#fff" /><path d="M1 0L8 15" stroke="#000" fill="none" /></svg>
                <span>MAIN</span>
                <svg width="10" height="15" viewBox="0 0 10 15"><path d="M0 0h9L2 15H0z" fill="#fff" /><path d="M2 15L9 0" stroke="#000" fill="none" /></svg>
              </button>
            </div>
          </div>
        </div>
      </section>
    </main>

    <div class="documents">
      <button v-for="(d, i) in documents" :key="d" type="button" :class="{ current: i === 1 }">{{ d }}</button>
    </div>
    <div class="status"></div>

    <aside class="overlay">
      <svg width="54" height="14" viewBox="0 0 54 14">
        <path d="M1 3h14M1 7.500h14M1 12h14" stroke="#e6e6e6" stroke-width="2" />
        <path d="M21 2h14l-7 10z" fill="#f0f0f0" />
        <path d="M42 2l10 10M52 2l-10 10" stroke="#f0f0f0" stroke-width="2.500" />
      </svg>
      <div class="meter">
        <svg width="18" height="14" viewBox="0 0 18 14"><path d="M0 12l4-3h8v3zM0 13.500h13" fill="#d9c632" stroke="#d9c632" /><path d="M13.500 0v13M16.500 2v2M16.500 6v2" stroke="#e6d23a" stroke-width="1.500" /></svg>
        <strong>12</strong>
      </div>
    </aside>
  </div>
</template>

<style>
body { margin: 0; background: #fff; }
</style>

<style scoped>
.app { position: relative; display: flex; flex-direction: column; height: 100vh; overflow: hidden; background: #fff; color: #000; font: 11px "Noto Sans", "Open Sans", sans-serif; }
button { margin: 0; padding: 0; border: 0; background: none; color: inherit; font: inherit; flex: none; }
svg { display: block; }
.menu { display: flex; flex: none; gap: 15px; height: 22px; padding-left: 5px; border-bottom: 1px solid #a8a8a8; }
.menu button { line-height: 22px; white-space: nowrap; }

.bar { display: flex; align-items: center; flex: none; height: 27px; background: #f0f0f0; }
.bar + .bar { padding-bottom: 2px; border-top: 1px solid #a8a8a8; }
.main-bar { align-self: flex-start; height: 30px; margin-left: 4px; padding: 0 4px; border: solid #a0a0a0; border-width: 0 1px 1px 0; }
.tool { display: flex; align-items: center; justify-content: center; width: 23px; height: 24px; }
.tool.pressed { background: #f8f8f8; box-shadow: inset 1px 1px #9a9a9a, inset -1px -1px #fff; }
.tool svg { overflow: visible; font-family: "Liberation Sans", sans-serif; }
.drop { display: flex; align-items: center; justify-content: center; width: 15px; height: 22px; }
.drop::after { content: ""; border: solid transparent; border-width: 4px 4px 0; border-top-color: #000; }
.drop.dim::after { border-top-color: #9a9a9a; }
.sep { flex: none; width: 1px; height: 24px; margin: 0 2px; background: #a0a0a0; }
.grip { flex: none; width: 11px; height: 30px; margin-left: 3px; border-left: 1px solid #8c8c8c; background: repeating-linear-gradient(transparent 0 3px, #b0b0b0 3px 5px) 6px 4px / 2px 22px no-repeat; }

.mdi { display: grid; grid-template-columns: 950fr 954fr; gap: 1px; flex: 1; min-height: 0; margin: 4px 2px 0 4px; padding: 0 5px 3px 2px; border: solid #696969; border-width: 2px 2px 2px 0; background: #f6f6f6; box-sizing: border-box; }
.window { display: flex; flex-direction: column; min-width: 0; min-height: 0; box-sizing: border-box; border-radius: 6px 6px 0 0; }
.back { padding: 0 8px 5px 7px; background: #dae5f1; }
.front { padding: 0 7px 7px 7px; background: #b9d1ea; border: 1px solid #000; border-top-color: #8aa; box-shadow: inset -1px -1px #5bc8f0; }
.front .titlebar { height: 29px; }
.titlebar { display: flex; align-items: center; flex: none; height: 30px; margin: 0 -7px; padding: 5px 8px 0; box-sizing: border-box; border-radius: 6px 6px 0 0; background: linear-gradient(#bfcddb, #d9e4f0); }
.front .titlebar { padding-left: 10px; background: linear-gradient(#98b3d0, #b9d1ea); }
.titlebar h1 { flex: 1; margin: 0 0 0 4px; font-size: 11px; font-weight: 400; white-space: nowrap; overflow: hidden; color: #8a9097; }
.front h1 { color: #000; }
.controls { display: flex; gap: 2px; }
.controls button { display: flex; align-items: center; justify-content: center; width: 32px; height: 18px; box-sizing: border-box; border: 1px solid #8f9dab; border-radius: 2px; background: linear-gradient(#d4dfe9, #c4d1de); box-shadow: inset 0 0 0 1px #e2eaf2; }
.front .controls button { border-color: #5f7388; background: linear-gradient(#c9dbed 50%, #a3bdd8 50%); }
.front .controls button:last-child { border-color: #5a1f1a; background: linear-gradient(#e09a90 50%, #bf3a28 50%); box-shadow: inset 0 0 0 1px #e8a79e; }
.client { display: flex; flex-direction: column; flex: 1; min-height: 0; background: #f0f0f0; }
.back .client { border-bottom: 1px solid #fff; }
.front .client { padding-bottom: 3px; border: solid #fff; border-width: 0 1px; }
.client .bar { padding-left: 1px; }
.pane { display: flex; flex: 1; min-height: 0; background: #fff; border: solid #757575; border-width: 2px 0 0 2px; }
.sheet { flex: 1; min-width: 0; overflow: hidden; }
.label { font: 12px "DejaVu Sans", Verdana, sans-serif; fill: #147a14; }
.note { font: bold 12px "DejaVu Sans", Verdana, sans-serif; fill: #000; white-space: pre; }
.note.red { fill: #dc1010; }
.plots { flex: 1; min-width: 0; width: 100%; height: 100%; }
.axis { font: 10px "Liberation Sans", Arial, sans-serif; fill: #0a0aaa; white-space: pre; }
.heading { font-size: 11px; }
.trace { fill: #dc1010; }

.sb { display: flex; align-items: center; justify-content: center; width: 16px; height: 16px; box-sizing: border-box; background: #f0f0f0; border: 1px solid; border-color: #fff #707070 #707070 #fff; }
.vscroll { display: flex; flex-direction: column; flex: none; width: 16px; padding-top: 4px; background: #f7f7f7; }
.thumb { background: #f0f0f0; border: 1px solid; border-color: #fff #707070 #707070 #fff; box-sizing: border-box; flex: none; }
.thumb.v { height: 30%; margin-top: 4px; }
.thumb.h { width: 139px; margin-left: 68px; }
.end { margin-top: auto; }
.hscroll .end { margin: 0 0 0 auto; }
.sheets { display: flex; flex: none; height: 16px; padding-left: 5px; }
.navs { display: flex; }
.navs .sb { border: 1px solid #777; box-shadow: inset 1px 1px #fff; }
.tabs { display: flex; flex: 1; height: 15px; border-top: 1px solid #000; border-right: 1px solid #000; font: 11px "Liberation Sans", Arial, sans-serif; }
.tab { display: flex; align-items: center; line-height: 15px; }
.tab span { padding: 0 1px 0 3px; }
.tab.on { margin-top: -1px; font-weight: 700; }
.tab.on span { padding: 0 1px 0 0; background: #fff; }
.front .tab.on span { padding: 0 4px; }
.back .tabs { flex: 0 0 343px; }
.front .tabs { border-right: 0; margin-right: 18px; }
.hscroll { display: flex; flex: 1; margin-left: 4px; background: #f7f7f7; }
.corner { width: 16px; }

.documents { display: flex; align-items: flex-start; flex: none; height: 28px; margin-left: 4px; background: #f0f0f0; font: 11px Lato, "Liberation Sans", sans-serif; }
.documents button { height: 19px; padding: 0 4px 0 3px; border-bottom: 2px solid #8a8a8a; box-sizing: border-box; white-space: pre; }
.documents .current { height: 21px; margin-left: 2px; padding: 0 7px 0 5px; border: solid #707070; border-width: 0 2px 2px 1px; }
.status { flex: none; height: 8px; margin-left: 4px; border-top: 1px solid #a0a0a0; background: #fff; }

.overlay { position: absolute; right: 25px; bottom: 0; display: flex; flex-direction: column; align-items: flex-end; justify-content: space-between; width: 120px; height: 76px; padding: 8px 7px 2px 0; box-sizing: border-box; overflow: hidden; background: rgba(76, 76, 76, .56); border: 1px solid rgba(50, 50, 50, .5); border-bottom: 0; }
.meter { display: flex; align-items: center; gap: 16px; color: #f2e24a; font: 15px "DejaVu Sans", sans-serif; }
</style>
